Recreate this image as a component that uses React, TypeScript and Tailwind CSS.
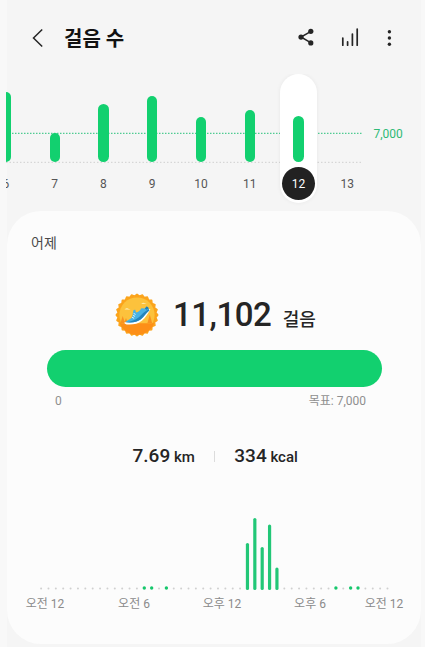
import clsx from "clsx"

const days = [
  { day: 6, height: 70 },
  { day: 7, height: 29 },
  { day: 8, height: 58 },
  { day: 9, height: 66 },
  { day: 10, height: 45 },
  { day: 11, height: 52 },
  { day: 12, height: 46, selected: true },
  { day: 13, height: 0 },
]

// half-hour slots, index -> bar height
const slots: Record<number, number> = {
  14: 3,
  15: 3,
  17: 3,
  28: 47,
  29: 72,
  30: 43,
  31: 65.5,
  32: 22.5,
  40: 3,
  42: 3,
  43: 3,
}

const badgePoints = Array.from({ length: 48 }, (_, i) => {
  const r = i % 2 === 0 ? 20.8 : 19
  const a = (i * Math.PI) / 24
  return `${22 + r * Math.sin(a)},${22 - r * Math.cos(a)}`
}).join(" ")

function Badge() {
  return (
    <svg width="44" height="44" viewBox="0 0 44 44" className="shrink-0">
      <polygon points={badgePoints} fill="#fba41c" stroke="#fba41c" strokeWidth="1.4" strokeLinejoin="round" />
      <circle cx="22" cy="22" r="17.6" fill="#fcc23c" />
      <path d="M4.6 30.3h34.8A18.8 18.8 0 0 1 4.6 30.3z" fill="#fd8f17" />
      <path d="M7.7 23l2.4 7.3H5.4zM11 25l2 5.3H9zM34.8 21.5l2.4 8.8h-4.8z" fill="#f99220" />
      <path d="M9.5 16.6q2-2.6 4-.8l2 .9zM26.2 11q2-2.2 3.5-.8l2 .8z" fill="#fde7a5" />
      <path
        d="M9.6 29.3c5 .3 9.6-.4 13.4-3.3 4-3 6-7 10-9.4l2.4-.6c-2.2 4.4-4.7 8.6-8.5 11.7-4 3.1-9 4.2-15.2 3.7-1.9-.2-2.6-1.1-2.1-2.1z"
        fill="#fff"
      />
      <path
        d="M10.4 29c1.2-1.6 4.6-2.3 6.3-4.5 1.4-1.9.8-4.8 1.9-7.6l1.6-.2.8 2.8c2.7-.3 4-2.5 5.4-4.3l3.4.2 1.8-1.9 1.5.7 1.2 3.4c-3.2 2.4-5 6.2-8.7 8.9-4.2 3-9 3.6-15.2 2.5z"
        fill="#48b2e4"
      />
      <path d="M10.4 29c4.8.1 9.3-1.4 12.8-4.2 3.5-2.9 5.6-6.2 10.6-8.5l.5 1.2c-3.2 2.4-5 6.2-8.7 8.9-4.2 3-9 3.6-15.2 2.6z" fill="#2484bc" />
      <path d="M29.8 15.4l1.8-1.9 1.5.7.5 1.5-2.2 1z" fill="#2280b8" />
      <path d="M18.6 20.4l2 1M18 22.4l2.1 1M17 24.3l2.1 1" stroke="#d9f5ff" strokeWidth="1" />
    </svg>
  )
}

function Header() {
  return (
    <header className="flex h-[74px] items-center pl-[31px] pr-[32px] text-[#252525]">
      <svg width="13" height="20" viewBox="0 0 13 20" fill="none" stroke="currentColor" strokeWidth="1.5" className="mt-0.5">
        <path d="M11.2 1.5L2.5 10l8.7 8.5" />
      </svg>
      <h1 className="ml-5 mt-[3px] text-[20px] font-bold leading-6 text-[#111]">걸음 수</h1>
      <div className="ml-auto flex items-center">
        <svg width="18" height="18" viewBox="0 0 18 18" fill="currentColor" className="mr-[26px]">
          <path d="M14 3.3L4 9l10 5.8" fill="none" stroke="currentColor" strokeWidth="1.5" />
          <circle cx="13.8" cy="3.3" r="2.6" />
          <circle cx="4" cy="9.1" r="2.6" />
          <circle cx="13.8" cy="14.9" r="2.6" />
        </svg>
        <svg width="18" height="20" viewBox="0 0 18 20" stroke="currentColor" strokeWidth="1.7" strokeLinecap="round" className="mr-[28px]">
          <path d="M1.8 11v7.2M6.6 14.8v3.4M11.4 7v11.2M16.2 2.1v16.1" />
        </svg>
        <svg width="6" height="18" viewBox="0 0 6 18" fill="currentColor" className="mt-px">
          <circle cx="2.4" cy="2.7" r="1.7" />
          <circle cx="2.4" cy="9" r="1.7" />
          <circle cx="2.4" cy="15.3" r="1.7" />
        </svg>
      </div>
    </header>
  )
}

function WeekChart() {
  return (
    <section className="relative ml-[6px] h-[137px] overflow-hidden">
      <svg width="357" height="90" className="absolute left-0 top-0">
        <path d="M0 59.4H356" stroke="#4fcb92" strokeWidth="1.2" strokeDasharray="1.5 1.5" />
        <path d="M0 88.3H356" stroke="#cfcfcf" strokeWidth="1" strokeDasharray="1.5 2" />
      </svg>
      <div className="relative -ml-[24.4px] flex">
        {days.map((d) => (
          <div key={d.day} className="flex w-[48.75px] shrink-0 justify-center">
            <div
              className={clsx(
                "flex h-[129px] w-[37px] flex-col items-center rounded-full",
                d.selected && "bg-white shadow-[0_0_4px_rgba(0,0,0,0.06)]"
              )}
            >
              <div className="flex h-[88px] items-end">
                <div className="w-[10.4px] rounded-full bg-[#12d06f]" style={{ height: d.height }} />
              </div>
              <div
                className={clsx(
                  "mt-[5px] flex size-[33px] items-center justify-center rounded-full text-[12px]",
                  d.selected ? "bg-[#222] text-white" : "text-[#555]"
                )}
              >
                {d.day}
              </div>
            </div>
          </div>
        ))}
      </div>
      <span className="absolute left-[367.5px] top-[51px] text-[12px] leading-[18px] text-[#2fba76]">7,000</span>
    </section>
  )
}

function HourChart() {
  return (
    <div className="mt-[45px]">
      <svg width="356" height="76" viewBox="0 0 356 76" className="ml-[30px]">
        {Array.from({ length: 48 }, (_, i) => {
          const x = 4.1 + i * 7.37
          const h = slots[i]
          if (!h) return <circle key={i} cx={x} cy="73.4" r="1" fill="#d0d0d0" />
          if (h === 3) return <circle key={i} cx={x} cy="73" r="1.7" fill="#16c76c" />
          return <rect key={i} x={x - 1.6} y={75 - h} width="3.2" height={h} rx="1.6" fill="#22c777" />
        })}
      </svg>
      <div className="mt-[4px] flex text-[12px] leading-[18px] text-[#8b8b8b]">
        <span className="w-[76px] text-center">오전 12</span>
        <span className="ml-[12px] w-[78px] text-center">오전 6</span>
        <span className="ml-[10px] w-[78px] text-center">오후 12</span>
        <span className="ml-[10px] w-[78px] text-center">오후 6</span>
        <span className="w-[70px] text-center">오전 12</span>
      </div>
    </div>
  )
}

export default function App() {
  return (
    <div className="h-[647px] w-[425px] overflow-hidden bg-[#f8f8f8] font-[Roboto,'Noto_Sans_CJK_KR',sans-serif]">
      <div className="h-full bg-[linear-gradient(to_right,#f8f8f8_7px,#f5f5f5_7px,#f5f5f5_421px,#f8f8f8_421px)]">
        <Header />
        <WeekChart />
        <main className="ml-[7px] h-[433px] w-[414px] rounded-[34px] bg-[#fcfcfc] pt-[22px]">
          <h2 className="ml-[24px] text-[14px] leading-5 text-[#4a4a4a]">어제</h2>
          <div className="mt-[40px] flex h-[44px] items-center pl-[108px]">
            <Badge />
            <span className="ml-[14px] text-[33px] font-medium leading-[44px] tracking-[-0.5px] text-[#252525]">11,102</span>
            <span className="ml-[11.5px] mt-[9px] text-[18px] font-medium leading-6 text-[#252525]">걸음</span>
          </div>
          <div className="ml-[39.5px] mt-[13px] h-[36.5px] w-[335.5px] rounded-full bg-[#12d06f]" />
          <div className="mt-[5px] flex justify-between pl-[48px] pr-[55px] text-[12px] leading-[18px] text-[#8f8f8f]">
            <span>0</span>
            <span>목표: 7,000</span>
          </div>
          <div className="mt-[34px] flex h-[26px] items-center pl-[125.5px] font-medium text-[#252525]">
            <span className="text-[19px]">
              7.69 <span className="-ml-[1px] text-[15px]">km</span>
            </span>
            <span className="ml-[19px] mr-[19.5px] h-[11px] w-px bg-[#dcdcdc]" />
            <span className="text-[19px]">
              334 <span className="-ml-[1px] text-[15px]">kcal</span>
            </span>
          </div>
          <HourChart />
        </main>
      </div>
    </div>
  )
}
